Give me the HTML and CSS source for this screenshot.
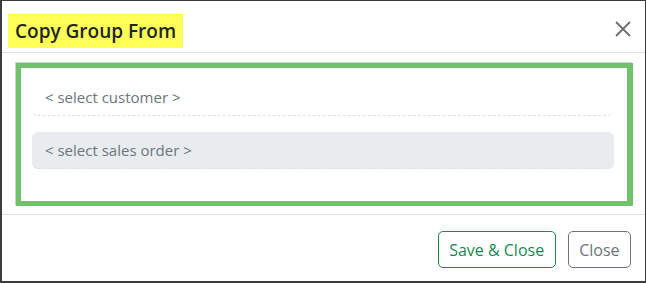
FILE: index.html
```html
<!DOCTYPE html>
<html lang="en">
<head>
  <meta charset="UTF-8">
  <title>Copy Group From</title>
  <link rel="stylesheet" href="styles.css">
</head>
<body>
  <div class="modal">
    <div class="modal-header">
      <h5 class="modal-title"><span class="hl">Copy Group From</span></h5>
      <button class="btn-x" aria-label="Close">
        <svg width="16" height="16" viewBox="0 0 16 16">
          <path d="M1 1 L15 15 M15 1 L1 15" stroke="#6f6f6f" stroke-width="1.8" fill="none"/>
        </svg>
      </button>
    </div>

    <div class="modal-body">
      <div class="picker">
        <div class="field">&lt; select customer &gt;</div>
        <div class="field filled">&lt; select sales order &gt;</div>
      </div>
    </div>

    <div class="modal-footer">
      <button class="btn btn-save">Save &amp; Close</button>
      <button class="btn btn-close">Close</button>
    </div>
  </div>
</body>
</html>
```

FILE: styles.css
```css
* { box-sizing: border-box; }
body { margin: 0; font-family: "Open Sans", "Noto Sans", sans-serif; background: #fff; }

.modal { width: 646px; height: 283px; border: 1px solid #3c3c3c; border-left-width: 2px; border-bottom-width: 2px; display: flex; flex-direction: column; }

.modal-header { height: 52px; padding: 13px 14px 0 6px; border-bottom: 1px solid #dee2e6; display: flex; justify-content: space-between; align-items: flex-start; }
.modal-title { margin: 0; font-size: 19px; font-weight: 600; color: #212529; }
.hl { display: block; background: #ffff57; padding: 0 7px; line-height: 34px; }
.btn-x { border: 0; background: none; padding: 0; margin-top: 7px; width: 16px; height: 16px; display: block; cursor: pointer; }
.btn-x svg { display: block; }

.modal-body { padding: 10px 12px 8px 14px; border-bottom: 1px solid #dee2e6; }
.picker { border: 5px solid #71c16a; border-right-width: 6px; box-shadow: -1px -1px 0 #d2d2d2; padding: 11px 13px 32px 11px; display: flex; flex-direction: column; gap: 16px; }
.field { height: 37px; padding: 0 13px; border-bottom: 1px dashed #dcdfe3; border-radius: 6px; font-size: 15px; color: #6c757d; display: flex; align-items: center; }
.field.filled { background: #e9ecef; }

.modal-footer { flex: 1; padding: 16px 14px 0 0; display: flex; justify-content: flex-end; align-items: flex-start; gap: 12px; }
.btn { height: 37px; padding: 0 10.5px; font-family: inherit; font-size: 16px; background: #fff; border: 1px solid; border-radius: 5px; cursor: pointer; }
.btn-save { color: #198754; border-color: #198754; }
.btn-close { color: #6c757d; border-color: #6c757d; }
```
